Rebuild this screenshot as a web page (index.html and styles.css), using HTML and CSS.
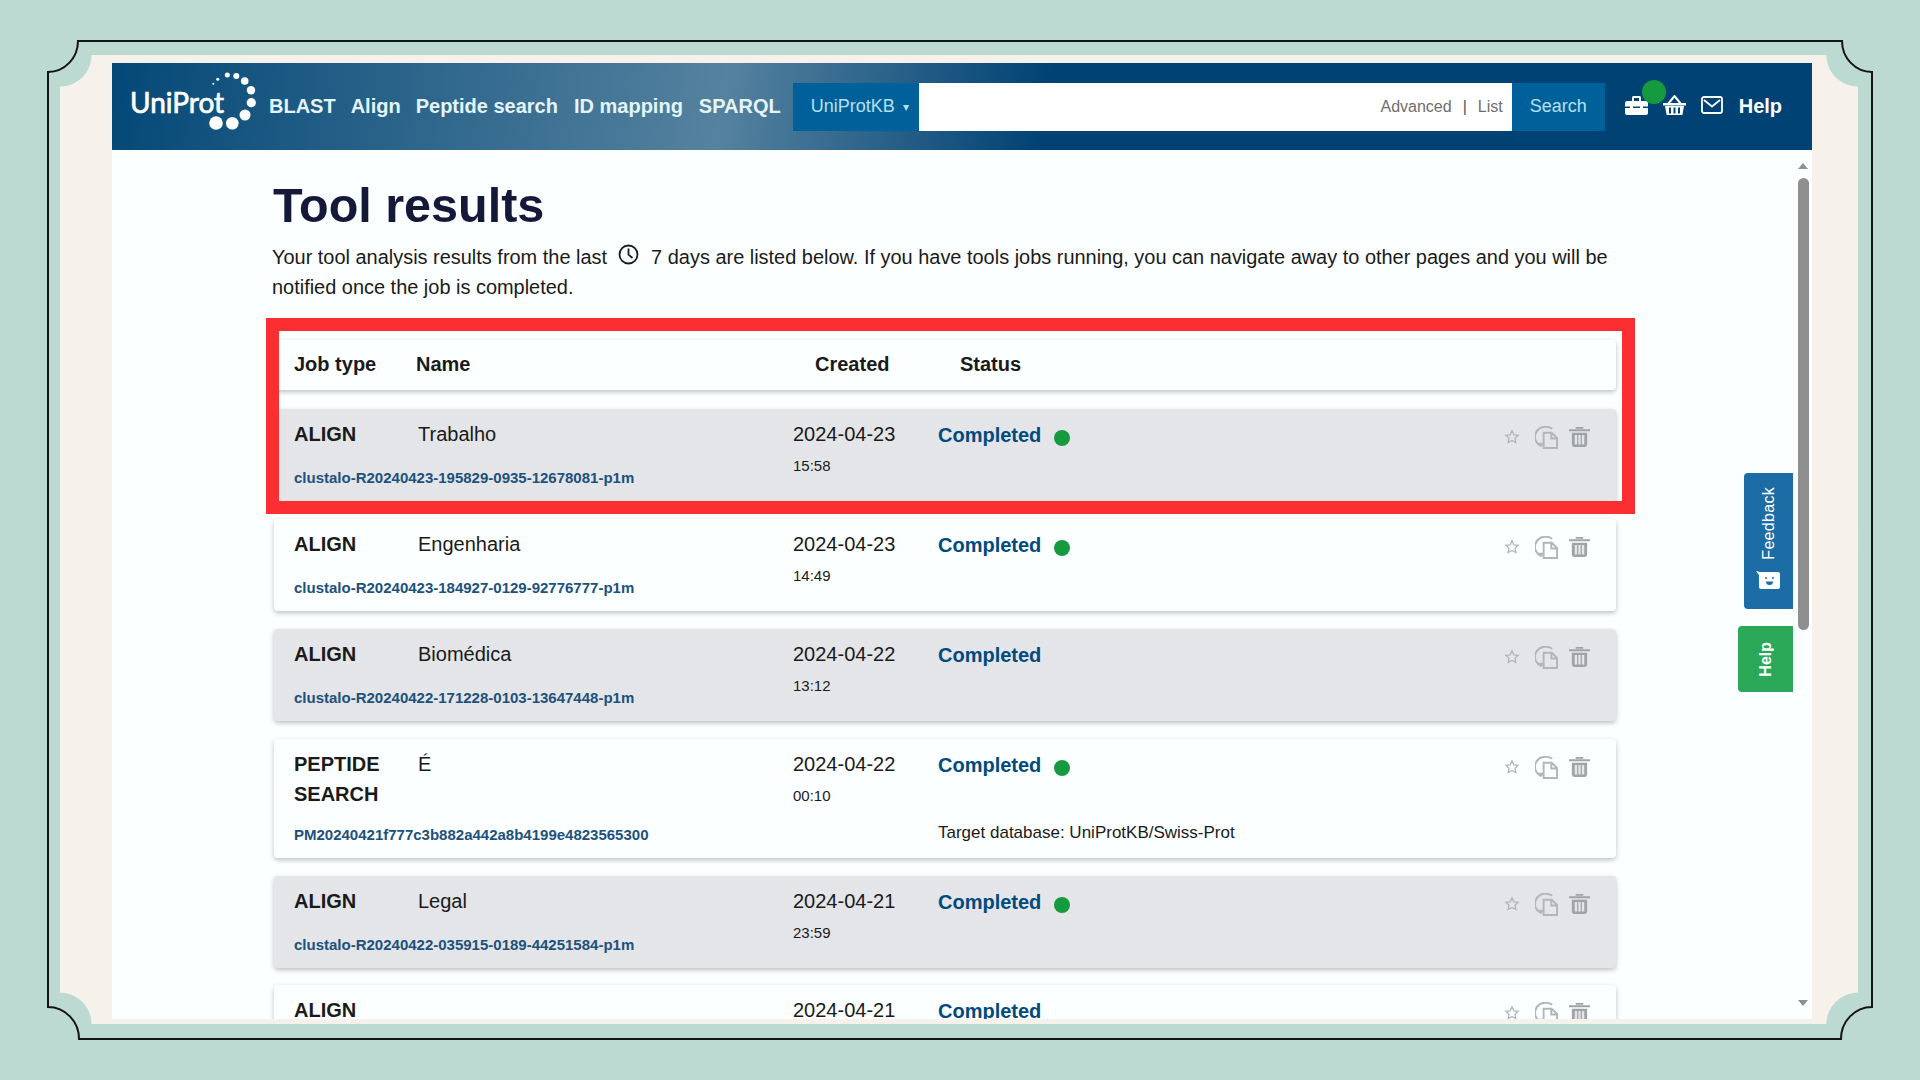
FILE: index.html
```html
<!DOCTYPE html>
<html lang="en">
<head>
  <meta charset="UTF-8" />
  <title>Tool results</title>
  <link rel="stylesheet" href="styles.css">
</head>
<body>

<svg class="frame-line" width="1920" height="1080" viewBox="0 0 1920 1080">
  <path d="M78 41H1842A30 31 0 0 0 1872 72V1007A31 32 0 0 0 1841 1039H79A31 32 0 0 0 48 1007V72A30 31 0 0 0 78 41Z" />
</svg>

<svg class="icon-defs" width="0" height="0">
  <symbol id="iconStar" viewBox="0 0 16 16">
    <path d="M8 1.8l1.9 4 4.3.5-3.2 3 .9 4.3L8 11.4l-3.900 2.200.9-4.300-3.200-3 4.300-.5z" fill="none" stroke="currentColor" stroke-width="1.300" />
  </symbol>
  <symbol id="iconResubmit" viewBox="0 0 24 24">
    <path d="M6.500 21A10.500 10.500 0 0 1 12 .9c2.200 0 4.300.7 6 2" fill="none" stroke="currentColor" stroke-width="2" />
    <path d="M2.500 17.500l4.500 4.500 2-4.500z" fill="currentColor" />
    <path d="M9 7h8.500l5.500 5.500V23H9zM17 7v6h6" fill="none" stroke="currentColor" stroke-width="2" />
  </symbol>
  <symbol id="iconTrash" viewBox="0 0 22 22">
    <path d="M0 3.500h22v2H0zM7 1h8v2H7z" fill="currentColor" />
    <path d="M3 7h16v12.500a2.500 2.500 0 0 1-2.500 2.500h-11A2.500 2.500 0 0 1 3 19.500z" fill="currentColor" />
    <path d="M6 9.500h2.500v10H6zM9.800 9.500h2.400v10H9.800zM13.500 9.500H16v10h-2.500z" fill="#e3e5e8" />
  </symbol>
</svg>

<div class="panel">
  <div class="window">

    <header class="topbar">
      <a class="logo">
        <span class="logo-text">UniProt</span>
        <svg class="logo-dots" width="138" height="87" viewBox="0 0 138 87">
          <circle cx="82.300" cy="20.700" r="1" />
          <circle cx="86.700" cy="16.300" r="1.500" />
          <circle cx="96.300" cy="12" r="2.500" />
          <circle cx="105.300" cy="13" r="3" />
          <circle cx="113.700" cy="18" r="3.800" />
          <circle cx="120" cy="27.300" r="4.200" />
          <circle cx="120.300" cy="39.700" r="4.600" />
          <circle cx="114" cy="52" r="5.500" />
          <circle cx="101.300" cy="60.300" r="6.300" />
          <circle cx="85" cy="60" r="6.800" />
        </svg>
      </a>
      <nav class="main-nav">
        <a>BLAST</a>
        <a>Align</a>
        <a>Peptide search</a>
        <a>ID mapping</a>
        <a>SPARQL</a>
      </nav>
      <div class="search">
        <div class="search-db">UniProtKB <span class="caret">▾</span></div>
        <div class="search-input">
          <a>Advanced</a>
          <span class="search-sep">|</span>
          <a>List</a>
        </div>
        <button class="search-btn">Search</button>
      </div>
      <div class="top-icons">
        <span class="tool-icon">
          <svg width="23" height="20" viewBox="0 0 23 20">
            <path d="M7 6V2.500A1.500 1.500 0 0 1 8.500 1h6A1.500 1.500 0 0 1 16 2.500V6h-2V3H9v3z" fill="#fff" />
            <path d="M2 6h19a2 2 0 0 1 2 2v3.500H0V8a2 2 0 0 1 2-2zM0 13h23v5a2 2 0 0 1-2 2H2a2 2 0 0 1-2-2z" fill="#fff" />
            <path d="M5 10.500h3v4H5zM15 10.500h3v4h-3z" fill="#fff" />
          </svg>
          <span class="tool-dot"></span>
        </span>
        <svg class="top-icon" width="23" height="20" viewBox="0 0 23 20">
          <path d="M5 9l6.500-8L18 9" fill="none" stroke="#fff" stroke-width="2" />
          <path d="M0 8h23v2.500H0zM2 11h19l-1.600 9H3.600zM6 12.500v6h2v-6zM10.500 12.500v6h2v-6zM15 12.500v6h2v-6z" fill="#fff" fill-rule="evenodd" />
        </svg>
        <svg class="top-icon" width="22" height="18" viewBox="0 0 22 18">
          <rect x="1" y="1" width="20" height="16" rx="2" fill="none" stroke="#fff" stroke-width="1.800" />
          <path d="M3 4l8 6.500L19 4" fill="none" stroke="#fff" stroke-width="1.800" />
        </svg>
        <a class="help-link">Help</a>
      </div>
    </header>

    <main class="content">
      <h1>Tool results</h1>
      <p class="intro">
        Your tool analysis results from the last
        <svg class="clock" width="21" height="21" viewBox="0 0 21 21">
          <circle cx="10.500" cy="10.500" r="9" fill="none" stroke="#1a1a1a" stroke-width="1.800" />
          <path d="M10.500 4.500v6.200l4 3.300" fill="none" stroke="#1a1a1a" stroke-width="1.800" />
        </svg>
        7 days are listed below. If you have tools jobs running, you can navigate away to other pages and you will be<br>
        notified once the job is completed.
      </p>

      <div class="results">
        <div class="results-head">
          <span>Job type</span>
          <span>Name</span>
          <span>Created</span>
          <span>Status</span>
        </div>

        <div class="job job-grey">
          <div class="job-type">ALIGN</div>
          <div class="job-name">Trabalho</div>
          <div class="job-date">2024-04-23<small>15:58</small></div>
          <div class="job-status"><b>Completed</b><i class="dot"></i></div>
          <div class="job-actions">
            <svg class="act-star"><use href="#iconStar" /></svg>
            <svg class="act-doc"><use href="#iconResubmit" /></svg>
            <svg class="act-trash"><use href="#iconTrash" /></svg>
          </div>
          <a class="job-link">clustalo-R20240423-195829-0935-12678081-p1m</a>
        </div>

        <div class="job">
          <div class="job-type">ALIGN</div>
          <div class="job-name">Engenharia</div>
          <div class="job-date">2024-04-23<small>14:49</small></div>
          <div class="job-status"><b>Completed</b><i class="dot"></i></div>
          <div class="job-actions">
            <svg class="act-star"><use href="#iconStar" /></svg>
            <svg class="act-doc"><use href="#iconResubmit" /></svg>
            <svg class="act-trash"><use href="#iconTrash" /></svg>
          </div>
          <a class="job-link">clustalo-R20240423-184927-0129-92776777-p1m</a>
        </div>

        <div class="job job-grey">
          <div class="job-type">ALIGN</div>
          <div class="job-name">Biomédica</div>
          <div class="job-date">2024-04-22<small>13:12</small></div>
          <div class="job-status"><b>Completed</b></div>
          <div class="job-actions">
            <svg class="act-star"><use href="#iconStar" /></svg>
            <svg class="act-doc"><use href="#iconResubmit" /></svg>
            <svg class="act-trash"><use href="#iconTrash" /></svg>
          </div>
          <a class="job-link">clustalo-R20240422-171228-0103-13647448-p1m</a>
        </div>

        <div class="job job-tall">
          <div class="job-type">PEPTIDE SEARCH</div>
          <div class="job-name">É</div>
          <div class="job-date">2024-04-22<small>00:10</small></div>
          <div class="job-status">
            <b>Completed</b><i class="dot"></i>
            <div class="job-target">Target database: UniProtKB/Swiss-Prot</div>
          </div>
          <div class="job-actions">
            <svg class="act-star"><use href="#iconStar" /></svg>
            <svg class="act-doc"><use href="#iconResubmit" /></svg>
            <svg class="act-trash"><use href="#iconTrash" /></svg>
          </div>
          <a class="job-link">PM20240421f777c3b882a442a8b4199e4823565300</a>
        </div>

        <div class="job job-grey">
          <div class="job-type">ALIGN</div>
          <div class="job-name">Legal</div>
          <div class="job-date">2024-04-21<small>23:59</small></div>
          <div class="job-status"><b>Completed</b><i class="dot"></i></div>
          <div class="job-actions">
            <svg class="act-star"><use href="#iconStar" /></svg>
            <svg class="act-doc"><use href="#iconResubmit" /></svg>
            <svg class="act-trash"><use href="#iconTrash" /></svg>
          </div>
          <a class="job-link">clustalo-R20240422-035915-0189-44251584-p1m</a>
        </div>

        <div class="job">
          <div class="job-type">ALIGN</div>
          <div class="job-name"></div>
          <div class="job-date">2024-04-21</div>
          <div class="job-status"><b>Completed</b></div>
          <div class="job-actions">
            <svg class="act-star"><use href="#iconStar" /></svg>
            <svg class="act-doc"><use href="#iconResubmit" /></svg>
            <svg class="act-trash"><use href="#iconTrash" /></svg>
          </div>
        </div>

        <div class="highlight"></div>
      </div>

      <div class="side-tab tab-feedback">
        <span>Feedback</span>
        <svg width="25" height="19" viewBox="0 0 25 19">
          <path d="M0 0l4 1h18a2 2 0 0 1 2 2v13a2 2 0 0 1-2 2H5a2 2 0 0 1-2-2V4z" fill="#fff" />
          <circle cx="10" cy="7" r="1" fill="#1c6da5" />
          <circle cx="17" cy="7" r="1" fill="#1c6da5" />
          <path d="M10 10.500h7a3.500 3.500 0 0 1-7 0z" fill="#1c6da5" />
        </svg>
      </div>
      <div class="side-tab tab-help"><span>Help</span></div>

      <div class="scrollbar">
        <i class="arrow-up"></i>
        <i class="thumb"></i>
        <i class="arrow-down"></i>
      </div>
    </main>

  </div>
</div>

</body>
</html>
```

FILE: styles.css
```css
* {
  box-sizing: border-box;
}

html, body {
  height: 1080px;
}

body {
  margin: 0;
  padding: 55px 62px 56px 60px;
  background-color: #bcdad1;
  font-family: "Liberation Sans", Arial, sans-serif;
  color: #1a1a1a;
  overflow: hidden;
}

.frame-line {
  position: absolute;
  top: 0;
  left: 0;
}

.frame-line path {
  fill: none;
  stroke: #141414;
  stroke-width: 2;
}

.icon-defs {
  position: absolute;
}

/* cream card with the four scooped corners */
.panel {
  position: relative;
  height: 969px;
  padding: 8px 46px 5px 52px;
  background:
    radial-gradient(circle at 0 0, transparent 31px, #f6f1ea 32px) top left / 51% 51% no-repeat,
    radial-gradient(circle at 100% 0, transparent 31px, #f6f1ea 32px) top right / 51% 51% no-repeat,
    radial-gradient(circle at 0 100%, transparent 31px, #f6f1ea 32px) bottom left / 51% 51% no-repeat,
    radial-gradient(circle at 100% 100%, transparent 31px, #f6f1ea 32px) bottom right / 51% 51% no-repeat;
}

.window {
  display: flex;
  flex-direction: column;
  height: 956px;
  background-color: #fcffff;
  overflow: hidden;
}

/* top bar */
.topbar {
  display: flex;
  align-items: center;
  flex: 0 0 87px;
  padding-left: 19px;
  background: linear-gradient(98deg, #044877 0%, #55829f 36%, #004274 55%, #004274 100%);
  color: #fff;
}

.logo {
  position: relative;
  display: block;
  flex: 0 0 138px;
  height: 87px;
}

.logo-text {
  position: absolute;
  top: 22px;
  left: -1px;
  font-family: Lato, sans-serif;
  font-size: 28px;
  line-height: 34px;
  color: #fff;
  -webkit-text-stroke: 0.7px #fff;
}

.logo-dots {
  position: absolute;
  top: 0;
  left: 0;
  fill: #fff;
}

.main-nav {
  display: flex;
  gap: 14px;
  font-size: 20px;
  font-weight: bold;
  color: #e4f5f9;
}

.main-nav a:nth-child(2) {
  margin-left: 1px;
}

.main-nav a:nth-child(3) {
  margin-left: 1px;
}

.main-nav a:nth-child(4) {
  margin-left: 2px;
}

.main-nav a:nth-child(5) {
  margin-left: 2px;
}

.search {
  display: flex;
  height: 48px;
  margin-left: 12px;
  font-size: 18px;
}

.search-db {
  display: flex;
  align-items: center;
  width: 126px;
  padding-left: 18px;
  background-color: #00609a;
  color: #b4e0f3;
}

.caret {
  margin-left: 8px;
  font-size: 12px;
}

.search-input {
  display: flex;
  align-items: center;
  justify-content: flex-end;
  gap: 11px;
  width: 593px;
  padding-right: 9px;
  background-color: #fff;
  color: #6e6e6e;
  font-size: 16px;
}

.search-sep {
  color: #555;
}

.search-btn {
  width: 93px;
  padding: 0;
  border: none;
  background-color: #00609a;
  color: #b4e0f3;
  font: inherit;
}

.top-icons {
  display: flex;
  align-items: center;
  gap: 15px;
  margin-left: 20px;
}

.tool-icon {
  position: relative;
  display: flex;
  margin-bottom: 3px;
}

.top-icon {
  margin-bottom: 3px;
}

.tool-dot {
  position: absolute;
  top: -15px;
  left: 17px;
  width: 24px;
  height: 24px;
  border-radius: 50%;
  background-color: #169a3f;
}

.help-link {
  margin-left: 1px;
  font-size: 20px;
  font-weight: bold;
}

/* page body */
.content {
  position: relative;
  flex: 1;
  padding-left: 160px;
  overflow: hidden;
}

h1 {
  margin: 27px 0 9px 1px;
  font-size: 48.5px;
  line-height: 56px;
  color: #14193a;
}

.intro {
  width: 1350px;
  margin: 0 0 38px;
  font-size: 19.96px;
  line-height: 30px;
}

.clock {
  margin: 0 7px 0 5px;
  vertical-align: -1px;
}

.results {
  position: relative;
  width: 1344px;
  padding-left: 2px;
}

.results-head {
  display: grid;
  grid-template-columns: 122px 399px 145px 1fr;
  align-items: center;
  height: 50px;
  margin-bottom: 19px;
  padding-left: 20px;
  padding-bottom: 1px;
  background-color: #fcffff;
  border-radius: 4px;
  box-shadow: 0 2px 5px rgba(0, 0, 0, 0.25);
  font-size: 20px;
  font-weight: bold;
}

.job {
  display: grid;
  grid-template-columns: 124px 375px 145px 1fr auto;
  grid-template-rows: auto 1fr;
  min-height: 92px;
  margin-bottom: 18px;
  padding: 10px 26px 13px 20px;
  background-color: #fcffff;
  border-radius: 4px;
  box-shadow: 0 2px 5px rgba(0, 0, 0, 0.25);
  font-size: 20px;
  line-height: 30px;
}

.job-grey {
  background-color: #e3e5e8;
}

.job-type {
  font-weight: bold;
}

.job-date {
  grid-row: span 2;
}

.job-date small {
  display: block;
  margin-top: 2px;
  font-size: 15px;
  line-height: 30px;
}

.job-status {
  grid-row: span 2;
  padding-top: 1px;
}

.job-status b {
  color: #014a7e;
}

.dot {
  display: inline-block;
  width: 16px;
  height: 16px;
  margin-left: 13px;
  border-radius: 50%;
  background-color: #169a3f;
  vertical-align: -4px;
}

.job-target {
  margin-top: 43px;
  font-size: 17px;
  line-height: 20px;
}

.job-actions {
  display: flex;
  align-items: flex-start;
  grid-column: 5;
  grid-row: 1;
  gap: 11px;
  margin-top: 7px;
  color: #b3b6b9;
}

.act-star {
  width: 16px;
  height: 16px;
  margin-top: 3px;
  margin-right: 4px;
}

.act-doc {
  width: 23px;
  height: 23px;
}

.act-trash {
  width: 21px;
  height: 21px;
  color: #a0a3a6;
}

.job-link {
  grid-column: 1 / span 2;
  grid-row: 2;
  margin-top: 19px;
  font-size: 15px;
  font-weight: bold;
  line-height: 20px;
  color: #1d517c;
}

.job-tall .job-type {
  width: 100px;
}

.job-tall .job-link {
  margin-top: 16px;
}

.job-tall + .job {
  margin-bottom: 17px;
}

/* red marker drawn over the first rows */
.highlight {
  position: absolute;
  top: -22px;
  left: -6px;
  width: 1369px;
  height: 196px;
  border: 13px solid #fb2f32;
}

/* tabs and scrollbar over the page */
.side-tab {
  position: absolute;
  right: 19px;
  display: flex;
  flex-direction: column;
  align-items: center;
  color: #fff;
  font-size: 16px;
  border-radius: 4px 0 0 4px;
}

.side-tab span {
  writing-mode: vertical-rl;
  transform: rotate(180deg);
}

.tab-feedback {
  top: 323px;
  width: 49px;
  height: 136px;
  padding-top: 14px;
  gap: 11px;
  background-color: #1c6da5;
  letter-spacing: 0.3px;
}

.tab-help {
  top: 476px;
  width: 55px;
  height: 66px;
  justify-content: center;
  background-color: #2ba858;
  font-weight: bold;
}

.scrollbar {
  position: absolute;
  top: 0;
  right: 3px;
  bottom: 0;
  width: 11px;
}

.thumb {
  position: absolute;
  top: 28px;
  left: 0;
  width: 11px;
  height: 452px;
  border-radius: 6px;
  background-color: #8f8f8f;
}

.arrow-up,
.arrow-down {
  position: absolute;
  left: 0;
  border-left: 5.500px solid transparent;
  border-right: 5.500px solid transparent;
}

.arrow-up {
  top: 13px;
  border-bottom: 6px solid #8f8f8f;
}

.arrow-down {
  top: 850px;
  border-top: 6px solid #8f8f8f;
}
```
